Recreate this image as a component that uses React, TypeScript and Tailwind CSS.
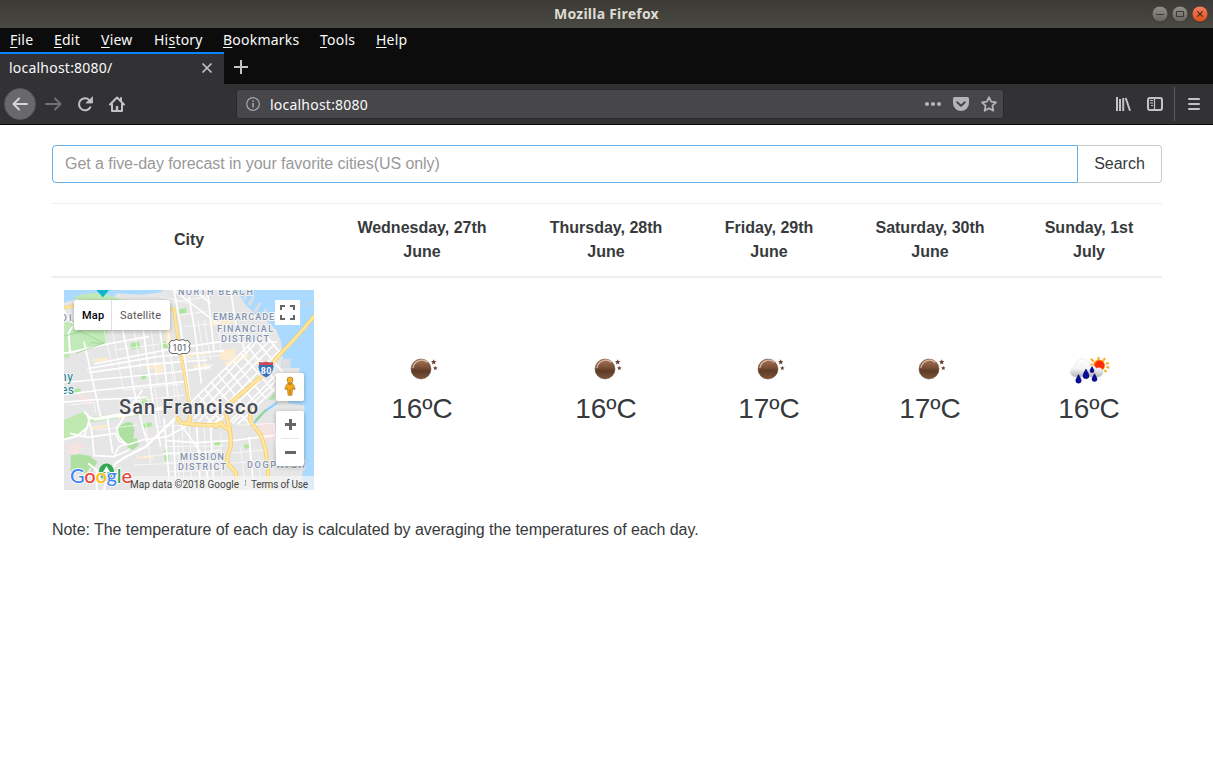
import React from "react";

const uiFont = "font-['Noto_Sans',sans-serif]";

const menus = [
  { pre: "", key: "F", post: "ile", cls: "w-[44px]" },
  { pre: "", key: "E", post: "dit", cls: "w-[47px]" },
  { pre: "", key: "V", post: "iew", cls: "w-[53px]" },
  { pre: "Hi", key: "s", post: "tory", cls: "w-[69px]" },
  { pre: "", key: "B", post: "ookmarks", cls: "w-[97px]" },
  { pre: "", key: "T", post: "ools", cls: "w-[56px]" },
  { pre: "", key: "H", post: "elp", cls: "w-[50px]" },
];

const days = [
  { a: "Wednesday, 27th", b: "June", temp: "16ºC", icon: "night" },
  { a: "Thursday, 28th", b: "June", temp: "16ºC", icon: "night" },
  { a: "Friday, 29th", b: "June", temp: "17ºC", icon: "night" },
  { a: "Saturday, 30th", b: "June", temp: "17ºC", icon: "night" },
  { a: "Sunday, 1st", b: "July", temp: "16ºC", icon: "rain" },
];

const columns = "grid grid-cols-[274px_192px_176px_150px_172px_146px]";

function WindowButtons() {
  return (
    <svg width="64" height="28" viewBox="1149 0 64 28" className="shrink-0">
      <defs>
        <linearGradient id="wb" x1="0" y1="0" x2="0" y2="1">
          <stop offset="0" stopColor="#92918a" />
          <stop offset="1" stopColor="#65645e" />
        </linearGradient>
        <linearGradient id="wc" x1="0" y1="0" x2="0" y2="1">
          <stop offset="0" stopColor="#f58060" />
          <stop offset="1" stopColor="#e14d1c" />
        </linearGradient>
      </defs>
      <circle cx="1160" cy="14" r="8" fill="url(#wb)" stroke="#35342f" strokeWidth=".8" />
      <circle cx="1180" cy="14" r="8" fill="url(#wb)" stroke="#35342f" strokeWidth=".8" />
      <circle cx="1200" cy="14" r="8" fill="url(#wc)" stroke="#35342f" strokeWidth=".8" />
      <path d="M1156 14.500h8M1176.500 11.500h7v5h-7z" fill="none" stroke="#3a3934" />
      <path d="M1197.300 11.300l5.400 5.400M1202.700 11.300l-5.400 5.400" stroke="#3a2a22" strokeWidth="1.200" />
    </svg>
  );
}

function BackIcon() {
  return (
    <svg width="16" height="16" viewBox="0 0 16 16" fill="none" stroke="currentColor" strokeWidth="2" strokeLinecap="round" strokeLinejoin="round">
      <path d="M15 8H1.500M7 2.500L1.500 8L7 13.500" />
    </svg>
  );
}

function NavIcons() {
  return (
    <svg width="90" height="40" viewBox="40 84 90 40" className="shrink-0" fill="none" strokeLinecap="round" strokeLinejoin="round">
      <path d="M46 104h14.500M55 98.500l5.500 5.500l-5.500 5.500" stroke="#727275" strokeWidth="1.900" />
      <path d="M90.300 107.200A6 6 0 1 1 89.300 100.100" stroke="#c3c3c5" strokeWidth="2" />
      <path d="M92.500 97.200v5.800h-6.200z" fill="#c3c3c5" stroke="#c3c3c5" strokeWidth=".8" />
      <path d="M110 104.500l7-7l7 7M112 103.500v7.500h10v-7.500" stroke="#c3c3c5" strokeWidth="2" />
      <path d="M115.800 111v-5h2.400v5z" fill="#c3c3c5" stroke="none" />
      <path d="M121 98v3" stroke="#c3c3c5" strokeWidth="2" />
    </svg>
  );
}

function UrlIcons() {
  return (
    <svg width="82" height="26" viewBox="921 91 82 26" className="ml-auto shrink-0">
      <g fill="#b4b4b6">
        <circle cx="927" cy="104" r="2.100" />
        <circle cx="933" cy="104" r="2.100" />
        <circle cx="939" cy="104" r="2.100" />
        <path d="M954.500 97h13a1.500 1.500 0 0 1 1.500 1.500v4.500a8 8 0 0 1-16 0v-4.500a1.500 1.500 0 0 1 1.500-1.500z" />
      </g>
      <path d="M957.200 102.200l3.800 3.700l3.800-3.700" fill="none" stroke="#474749" strokeWidth="2" strokeLinecap="round" strokeLinejoin="round" />
      <path d="M989 97.200l2.100 4.500l4.900.6l-3.600 3.400l.9 5l-4.300-2.400l-4.300 2.400l.9-5l-3.600-3.400l4.900-.6z" fill="none" stroke="#b4b4b6" strokeWidth="1.800" strokeLinejoin="round" />
    </svg>
  );
}

function ToolIcons() {
  return (
    <svg width="108" height="40" viewBox="1105 84 108 40" className="ml-auto shrink-0" fill="none">
      <path d="M1117 97v14M1120 99v12M1123.200 98v13" stroke="#c3c3c5" strokeWidth="2" />
      <path d="M1125.700 98l4.300 12.800" stroke="#c3c3c5" strokeWidth="2" />
      <rect x="1148" y="98" width="14" height="12" rx="2" stroke="#c3c3c5" strokeWidth="2" />
      <path d="M1154.500 98v12" stroke="#c3c3c5" strokeWidth="1.200" />
      <path d="M1150 100.500h3M1150 103h3M1151 105.500h2" stroke="#c3c3c5" />
      <path d="M1174.500 87v34" stroke="#5c5c5f" />
      <path d="M1189 99h10M1189 104h10M1189 109h10" stroke="#c3c3c5" strokeWidth="2" strokeLinecap="round" />
    </svg>
  );
}

function NightIcon() {
  return (
    <svg width="50" height="50" viewBox="0 0 50 50" className="block">
      <defs>
        <linearGradient id="moon" x1="0" y1="0" x2="0" y2="1">
          <stop offset="0" stopColor="#a87558" />
          <stop offset=".4" stopColor="#7d5238" />
          <stop offset=".6" stopColor="#5d3b27" />
          <stop offset="1" stopColor="#7d573c" />
        </linearGradient>
      </defs>
      <circle cx="24" cy="25" r="10" fill="url(#moon)" stroke="#5b4030" strokeWidth=".5" />
      <path d="M16 23.500a8.800 8.800 0 0 1 14-5.500" fill="none" stroke="#e2c7b6" strokeWidth="1.300" strokeLinecap="round" opacity=".85" />
      <path d="M36.700 15.300l.8 1.600l1.800.2l-1.300 1.300l.3 1.800l-1.600-.8l-1.600.8l.3-1.800l-1.300-1.300l1.800-.2zM38.300 22l.7 1.300l1.500.2l-1.100 1l.3 1.500l-1.400-.7l-1.400.7l.3-1.500l-1.100-1l1.500-.2z" fill="#6b4433" />
    </svg>
  );
}

function RainIcon() {
  return (
    <svg width="50" height="50" viewBox="0 0 50 50" className="block">
      <defs>
        <linearGradient id="cloud" x1="0" y1="0" x2="0" y2="1">
          <stop offset="0" stopColor="#ffffff" />
          <stop offset=".55" stopColor="#f3f3f3" />
          <stop offset="1" stopColor="#b4b4b4" />
        </linearGradient>
      </defs>
      <g stroke="#ffa51f" strokeWidth="2" fill="none">
        <path d="M34.500 16V13M39 17l2-2.800M42 20l2.800-1.200M42.500 23l2.800.8M40.500 26l2 2.200M29.500 17.500l-2.500-2.700M28.500 21l-2-.7" />
      </g>
      <circle cx="35" cy="21.500" r="6" fill="#ffa21b" />
      <circle cx="35.500" cy="21.500" r="4.900" fill="#ff2a08" />
      <path d="M12 33c-6.500 0-7.500-8-2-9.500c.5-5 4-8.500 8.500-8.500c5 0 7.500 3.500 8 7c3-1 5 0 5.500 2.500c3.500-2 6.500 0 7 2.500c.5 4-2 6-6 6z" fill="url(#cloud)" stroke="#dddddd" strokeWidth=".5" />
      <g fill="#0a0a9c" stroke="#00006b" strokeWidth=".5">
        <path d="M14.500 30.500c1.500 3 2.700 4.200 2.700 6a2.700 2.700 0 0 1-5.400 0c0-1.800 1.300-3 2.700-6z" />
        <path d="M22 25c1.700 3.300 3 4.700 3 6.800a3 3 0 0 1-6 0c0-2.100 1.300-3.500 3-6.800z" />
        <path d="M28 22.500c1 2 2 3 2 4.200a2 2 0 0 1-4 0c0-1.200 1-2.200 2-4.200z" />
        <path d="M30.500 29.500c1.300 3 2.500 4 2.500 5.500a2.500 2.500 0 0 1-5 0c0-1.500 1.200-2.500 2.500-5.500z" />
      </g>
    </svg>
  );
}

const motorways = [
  "M-5 54L40 46L90 33L160 45L315 54L331 60L342 150L356 222L366 280L374 335L378 390",
  "M755 74L700 138L640 202L590 262L545 300L498 340L484 366L496 410L500 438L500 470L492 495L488 515L516 550L518 605",
  "M340 384L350 398L372 402L430 406L470 404L496 420",
  "M372 402L378 385",
  "M455 410L470 398L484 412",
  "M556 350L560 395L590 435L604 475L612 540L614 605",
];

const avenues = [
  "M-5 190L20 187L130 162L255 140",
  "M90 222L315 178L470 155L640 156",
  "M70 236L280 200L480 182",
  "M75 248L240 224L430 210",
  "M-5 278L150 264L340 246L440 232",
  "M-5 315L110 300L370 274",
  "M-5 337L80 330L250 322",
  "M90 390L240 368L330 350",
  "M176 120L190 185L210 300L236 410L250 456",
  "M60 155L110 380",
  "M238 120L252 230L268 345L290 470",
  "M288 120L302 230L312 320",
  "M375 20L392 120L412 280",
  "M330 0L350 110L378 330",
  "M430 0L440 90L450 180",
  "M500 0L515 100L545 190",
  "M72 380L84 430L90 497L150 500L195 480",
  "M130 382L146 490",
  "M18 430L70 442L155 430L165 452L190 466",
  "M190 465L235 450L310 440L390 395",
  "M150 500L165 470L185 462L165 440L158 415L235 300",
  "M300 385L318 600",
  "M326 390L336 600",
  "M336 384L420 500L440 600",
  "M398 410L410 600",
  "M440 410L450 600",
  "M310 452L400 458L520 450L640 435",
  "M300 490L400 490L470 480",
  "M555 440L570 600",
  "M630 400L640 520",
];

const lanes = [
  "M120 120L145 230", "M145 120L178 300", "M210 120L230 240", "M262 120L282 290", "M272 290L288 400",
  "M310 100L332 320", "M322 200L345 330", "M402 90L425 240", "M420 90L440 210", "M465 90L470 180",
  "M360 110L470 98", "M345 75L430 65", "M340 210L470 196", "M350 245L450 225", "M150 180L340 155",
  "M130 240L340 215", "M180 300L350 282", "M190 336L360 315", "M20 345L90 337L96 370",
  "M290 20L375 40", "M320 38L430 20", "M344 440L344 600", "M355 410L360 600", "M376 410L384 600",
  "M420 410L430 600", "M470 430L474 560", "M300 470L480 468", "M305 520L470 512", "M310 545L470 540",
  "M240 500L330 490", "M210 525L330 520", "M100 420L220 405", "M245 400L260 520", "M530 470L545 600",
  "M585 500L590 600", "M500 520L600 512", "M500 490L600 480", "M530 405L640 400", "M280 410L380 405",
];

const downtown = [
  "M375 372L600 132", "M390 386L620 148", "M402 396L632 162", "M430 400L642 186", "M455 402L590 270",
  "M485 408L640 250", "M505 400L640 268", "M520 404L640 288", "M378 340L560 160", "M440 412L468 384",
  "M598 128L650 190", "M575 150L656 246", "M552 170L640 280", "M530 190L632 306", "M508 212L604 324",
  "M486 234L584 350", "M464 256L562 374", "M442 278L556 402", "M422 298L494 384", "M404 318L474 396",
  "M388 336L450 406",
];

function CityMap() {
  return (
    <svg width="250" height="200" viewBox="0 0 250 200" className="block font-[Roboto,sans-serif]">
      <rect width="250" height="200" fill="#e6e6e6" />
      <g transform="scale(.3333)">
        <path d="M0 0H300L285 8L230 14L160 10L130 40L60 18L0 38z" fill="#aadaff" />
        <path d="M30 20Q80 4 125 12L200 38L170 50H80z" fill="#c1eab8" />
        <path d="M518 0L530 20L545 45L570 68L605 92L636 118L652 155L656 206L650 232L706 234L716 326L672 330L672 340L720 346L722 362L705 376L712 425L722 428L706 450L712 475L708 505L720 535L714 555L718 600H750V0z" fill="#aadaff" />
        <path d="M536 24l9-16 5 3-5 22zM550 42l18-26 5 3-13 30zM568 62l20-26 5 4-16 28zM588 76l18-22 5 4-14 24zM606 92l20-20 6 4-18 24z" fill="#dcdee2" />
        <path d="M656 206h24v26h-28z" fill="#dcdee2" />
        <path d="M0 165V100L40 80H160L128 130L130 158L20 184L16 205L0 203z" fill="#c1eab8" />
        <path d="M-5 392L60 364L72 382L70 425L42 434L0 446z" fill="#bfe9b1" />
        <path d="M72 382L240 362V374L70 398z" fill="#bfe9b1" />
        <path d="M165 412C180 394 208 390 208 408L212 420C205 432 218 452 192 460L166 446C154 440 160 422 165 412zM195 452L218 444L225 465L207 480L188 470z" fill="#aee0a2" />
        <path d="M20 496L42 492L80 498L90 515L66 550L20 544zM84 505L100 515L82 550z" fill="#aee0a2" />
        <path d="M204 158l22-3 2 20-24 2zM200 160h12v18h-12zM290 156l22-3 2 20-24 2zM232 252l12-2 3 16-15 3zM232 322l16-2 2 22-16 2zM236 402l26-5 4 12-26 6zM300 482l13-2 2 32-13 2zM452 455l18-3v12l-18 3zM540 464l14-2 2 12-14 2zM345 58l22-4v14l-20 4zM30 298l20-3v12l-18 3z" fill="#aee79c" />
        <path d="M40 315l26-4 2 22-24 2zM10 468l35-14 16 14-24 27-28-7zM582 398l60-2v58h-44zM246 440l20-3v14l-20 3zM60 330l20-12 6 16-20 14z" fill="#f5e2e2" />
        <path d="M436 94l72-10 3 14-74 12zM465 182l50-6-3 32-42 4zM88 206l44-4v12l-44 2zM250 228l46-6v10l-46 8zM272 232h24v20h-24zM162 376l60-10v8l-60 12zM82 410l54-8v8l-54 10zM480 218l70-30 8 12-68 32zM352 196l80-14v10l-80 14zM218 500l52-3v9h-52zM300 108l16-4 8 60-16 2zM390 225l46-4v14l-46 4zM570 210l12-10 16 12-14 16z" fill="#fbecd0" />
        <path d="M570 400L602 364L640 338" fill="none" stroke="#8acfff" strokeWidth="6" />
        <path d="M574 392L606 360" stroke="#92d68a" strokeWidth="6" />
        <path d="M612 330L632 306V328z" fill="#b4e4aa" />
        <g fill="none" stroke="#fff" strokeLinejoin="round">
          {lanes.map((d) => (
            <path key={d} d={d} strokeWidth="2.400" opacity=".85" />
          ))}
          {avenues.map((d) => (
            <path key={d} d={d} strokeWidth="5" />
          ))}
          {downtown.map((d) => (
            <path key={d} d={d} strokeWidth="4.800" />
          ))}
          <path d="M-5 54L14 90L30 104L14 128L18 188M30 104L90 58L160 45" strokeWidth="6" />
          <path d="M330 0L420 70L460 100M390 0L440 40" strokeWidth="5" />
          <path d="M338 380L245 470L190 498L155 520L130 560L120 600M70 380L90 386L300 352" strokeWidth="7" />
          <path d="M-5 450L40 438L72 410M60 364L78 384L60 440M98 600V540L72 520" strokeWidth="6" />
        </g>
        <path d="M-5 140L50 124L120 160L80 158M36 190L118 160M20 100L50 124" fill="none" stroke="#9dd595" strokeWidth="2.500" />
        <path d="M708 48L750 36" stroke="#c4d3df" strokeWidth="4" />
        <g fill="none" strokeLinejoin="round" strokeLinecap="round">
          {motorways.map((d, i) => (
            <path key={d} d={d} stroke="#f4ca62" strokeWidth={i === 0 ? 9 : 12} />
          ))}
          {motorways.map((d, i) => (
            <path key={d} d={d} stroke="#ffe7a0" strokeWidth={i === 0 ? 6 : 8} />
          ))}
        </g>
      </g>
      <path d="M32.500 0H45L38.800 7.500z" fill="#12b5cb" />

      <g fill="#8292ad" stroke="#f5f5f5" strokeWidth="2" paintOrder="stroke" fontSize="9" fontWeight="500" strokeLinejoin="round">
        <text x="114" y="5" textLength="75">NORTH BEACH</text>
        <text x="149" y="30" textLength="75">EMBARCADERO</text>
        <text x="153" y="42" textLength="56">FINANCIAL</text>
        <text x="157" y="52" textLength="48">DISTRICT</text>
        <text x="116" y="170" textLength="44">MISSION</text>
        <text x="114" y="180" textLength="48">DISTRICT</text>
        <text x="183" y="178" textLength="58">DOGPATCH</text>
        <text x="-3" y="31" textLength="19">DIO</text>
      </g>
      <g fill="#1b7f8c" stroke="#f5f5f5" strokeWidth="1.600" paintOrder="stroke" fontSize="12">
        <text x="-4" y="91" textLength="13">ny</text>
        <text x="-3" y="104" textLength="13">es</text>
      </g>
      <text x="55" y="124" textLength="139" fontSize="20" fontWeight="500" fill="#474b54" stroke="#f4f4f4" strokeWidth="2" paintOrder="stroke" strokeLinejoin="round">San Francisco</text>

      <path d="M107 50.500q3 1 5-1q3.500 1.800 7 0q2 2 5 1l2 3q-2 3 0 6q-1 3-3 4h-5l-2.500 1.200l-2.500-1.200h-5q-3-1-3-4q2-3 0-6z" fill="#fff" stroke="#55585e" strokeWidth=".9" />
      <text x="108.500" y="61.300" fontSize="8.500" textLength="14.500" fill="#44474d">101</text>
      <path d="M195 72h14q2 5 0 9q-2 5-7 7q-5-2-7-7q-2-4 0-9z" fill="#3874bb" stroke="#fff" strokeWidth=".8" />
      <path d="M195 72l3 1l4-1.500l4 1.500l3-1v3h-14z" fill="#d8474a" />
      <text x="196.800" y="84" fontSize="9" fontWeight="700" fill="#fff" textLength="10.500">80</text>

      <path d="M35 181a7.500 7.500 0 1 1 15 0q0 6-7.500 10q-7.500-4-7.500-10z" fill="#34a853" />
      <path d="M42.500 176l3.500 6h-2.500v5h-2v-5H39z" fill="#fff" />
      <rect x="66" y="186" width="184" height="14" fill="#f5f5f5" opacity=".7" />
      <text x="6" y="193" fontSize="20" textLength="62" fontWeight="500" stroke="#fff" strokeWidth="1.800" paintOrder="stroke" strokeLinejoin="round" className="font-[Lato,sans-serif]">
        <tspan fill="#4285f4">G</tspan>
        <tspan fill="#ea4335">o</tspan>
        <tspan fill="#fbbc05">o</tspan>
        <tspan fill="#4285f4">g</tspan>
        <tspan fill="#34a853">l</tspan>
        <tspan fill="#ea4335">e</tspan>
      </text>
      <g fontSize="10" fill="#444">
        <text x="66" y="198" textLength="109">Map data ©2018 Google</text>
        <text x="187" y="198" textLength="57">Terms of Use</text>
      </g>
      <path d="M181.500 190v2.500M181.500 193.500v2" stroke="#777" strokeWidth=".8" />
    </svg>
  );
}

function MapCell() {
  return (
    <div className="relative h-[200px] w-[250px] overflow-hidden font-[Roboto,sans-serif]">
      <CityMap />
      <div className="absolute left-[10px] top-[10px] flex h-[30px] rounded-[2px] bg-white text-[11px] leading-[31px] tracking-[0.2px] shadow-[0_1px_4px_rgba(0,0,0,0.3)]">
        <div className="w-[38px] border-r border-[#e0e0e0] pl-2 font-medium text-black">Map</div>
        <div className="w-[58px] pl-2 text-[#565656]">Satellite</div>
      </div>
      <div className="absolute left-[211px] top-[10px] flex size-[25px] items-center justify-center bg-white">
        <svg width="15" height="15" viewBox="0 0 15 15" fill="none" stroke="#666" strokeWidth="2">
          <path d="M1 5V1h4M10 1h4v4M14 10v4h-4M5 14H1v-4" />
        </svg>
      </div>
      <div className="absolute left-[212px] top-[83px] flex h-[28px] w-[28px] items-center justify-center rounded-[2px] bg-white shadow-[0_1px_4px_rgba(0,0,0,0.3)]">
        <svg width="12" height="20" viewBox="0 0 12 20" className="mb-[2px]">
          <path d="M3.500 7.500q2.500-1 5 0q1.500 1 2.700 5.500l-1.500.8-1.200-2-.5 7.500H4l-.5-7.500-1.200 2L.8 13Q2 8.500 3.500 7.500z" fill="#f5a81c" stroke="#a87a2a" strokeWidth=".7" />
          <circle cx="6" cy="4" r="3" fill="#f7b223" stroke="#a87a2a" strokeWidth=".7" />
          <path d="M4 7.700q2 1.500 4 0M6 13.500v5" stroke="#b06c0d" fill="none" strokeWidth=".9" />
        </svg>
      </div>
      <div className="absolute left-[212px] top-[121px] flex h-[55px] w-[28px] flex-col items-center rounded-[2px] bg-white shadow-[0_1px_4px_rgba(0,0,0,0.3)]">
        <svg width="28" height="55" viewBox="0 0 28 55">
          <path d="M9 13.500h11M14.500 8v11M9 41.500h11" stroke="#666" strokeWidth="3" />
          <path d="M5 27.500h18" stroke="#e6e6e6" />
        </svg>
      </div>
    </div>
  );
}

export default function App() {
  return (
    <div className="flex h-[773px] w-[1213px] flex-col overflow-hidden bg-white">
      <header className={`flex flex-col text-[14px] tracking-[0.22px] text-[#f9f9fa] ${uiFont}`}>
        <div className="flex h-7 items-center bg-linear-to-b from-[#3b3a36] to-[#4b4943]">
          <div className="w-16" />
          <div className="flex-1 text-center text-[14px] font-bold leading-7 tracking-[0.23px] text-[#dfdbd2]">Mozilla Firefox</div>
          <WindowButtons />
        </div>
        <nav className="flex h-6 bg-[#0c0c0d] pl-[10px] leading-6">
          {menus.map((m) => (
            <span key={m.key} className={`shrink-0 whitespace-nowrap ${m.cls}`}>
              {m.pre}
              <span className="underline underline-offset-2">{m.key}</span>
              {m.post}
            </span>
          ))}
        </nav>
        <div className="flex h-8 bg-[#0c0c0d]">
          <div className="flex w-[224px] items-center border-t-2 border-[#0a84ff] bg-[#323234] pb-[3px] pl-[9px] pr-[11px]">
            <span className="flex-1">localhost:8080/</span>
            <svg width="12" height="12" viewBox="0 0 12 12" stroke="#c3c3c5" strokeWidth="1.700">
              <path d="M1.500 1.500l9 9M10.500 1.500l-9 9" />
            </svg>
          </div>
          <svg width="34" height="32" viewBox="0 0 34 32" stroke="#c3c3c5" strokeWidth="2">
            <path d="M10 15h14M17 8v14" />
          </svg>
        </div>
        <div className="flex h-[41px] items-center border-b border-[#0c0c0d] bg-[#323234]">
          <div className="ml-1 flex size-8 shrink-0 items-center justify-center rounded-full border border-[#58585a] bg-[#69696b] text-[#d7d7d8]">
            <BackIcon />
          </div>
          <div className="w-1" />
          <NavIcons />
          <div className="ml-[106px] flex h-[30px] w-[768px] shrink-0 items-center rounded-[3px] border border-[#29292b] bg-[#474749] pl-[9px]">
            <svg width="14" height="14" viewBox="0 0 14 14" fill="none" stroke="#a9a9ab" strokeWidth="1.200">
              <circle cx="7" cy="7" r="6.300" />
              <path d="M7 6v4.500M7 3.300v1.500" strokeWidth="1.600" />
            </svg>
            <span className="ml-[10px]">localhost:8080</span>
            <UrlIcons />
          </div>
          <ToolIcons />
        </div>
      </header>

      <main className="ml-[52px] mt-5 w-[1110px] font-['Liberation_Sans',sans-serif] text-[16px] leading-6 text-[#373a3c]">
        <form className="flex h-[38px]" onSubmit={(e) => e.preventDefault()}>
          <input
            placeholder="Get a five-day forecast in your favorite cities(US only)"
            className="w-[1026px] rounded-l-[4px] border border-[#66afe9] px-3 tracking-[-0.055px] outline-none placeholder:text-[#999999]"
          />
          <button className="flex-1 rounded-r-[4px] border border-l-0 border-[#cccccc] bg-white">Search</button>
        </form>

        <section className="mt-5 border-t border-[#eceeef]">
          <div className={`${columns} items-center border-b-2 border-[#eceeef] py-3 text-center font-bold`}>
            <div>City</div>
            {days.map((d) => (
              <div key={d.a}>
                {d.a}
                <br />
                {d.b}
              </div>
            ))}
          </div>
          <div className={`${columns} items-center py-3`}>
            <div className="pl-3">
              <MapCell />
            </div>
            {days.map((d) => (
              <div key={d.a} className="flex flex-col items-center pb-3">
                {d.icon === "night" ? <NightIcon /> : <RainIcon />}
                <div className="text-[28px] leading-[30px]">{d.temp}</div>
              </div>
            ))}
          </div>
        </section>
        <p className="mt-4 tracking-[-0.063px]">Note: The temperature of each day is calculated by averaging the temperatures of each day.</p>
      </main>
    </div>
  );
}
